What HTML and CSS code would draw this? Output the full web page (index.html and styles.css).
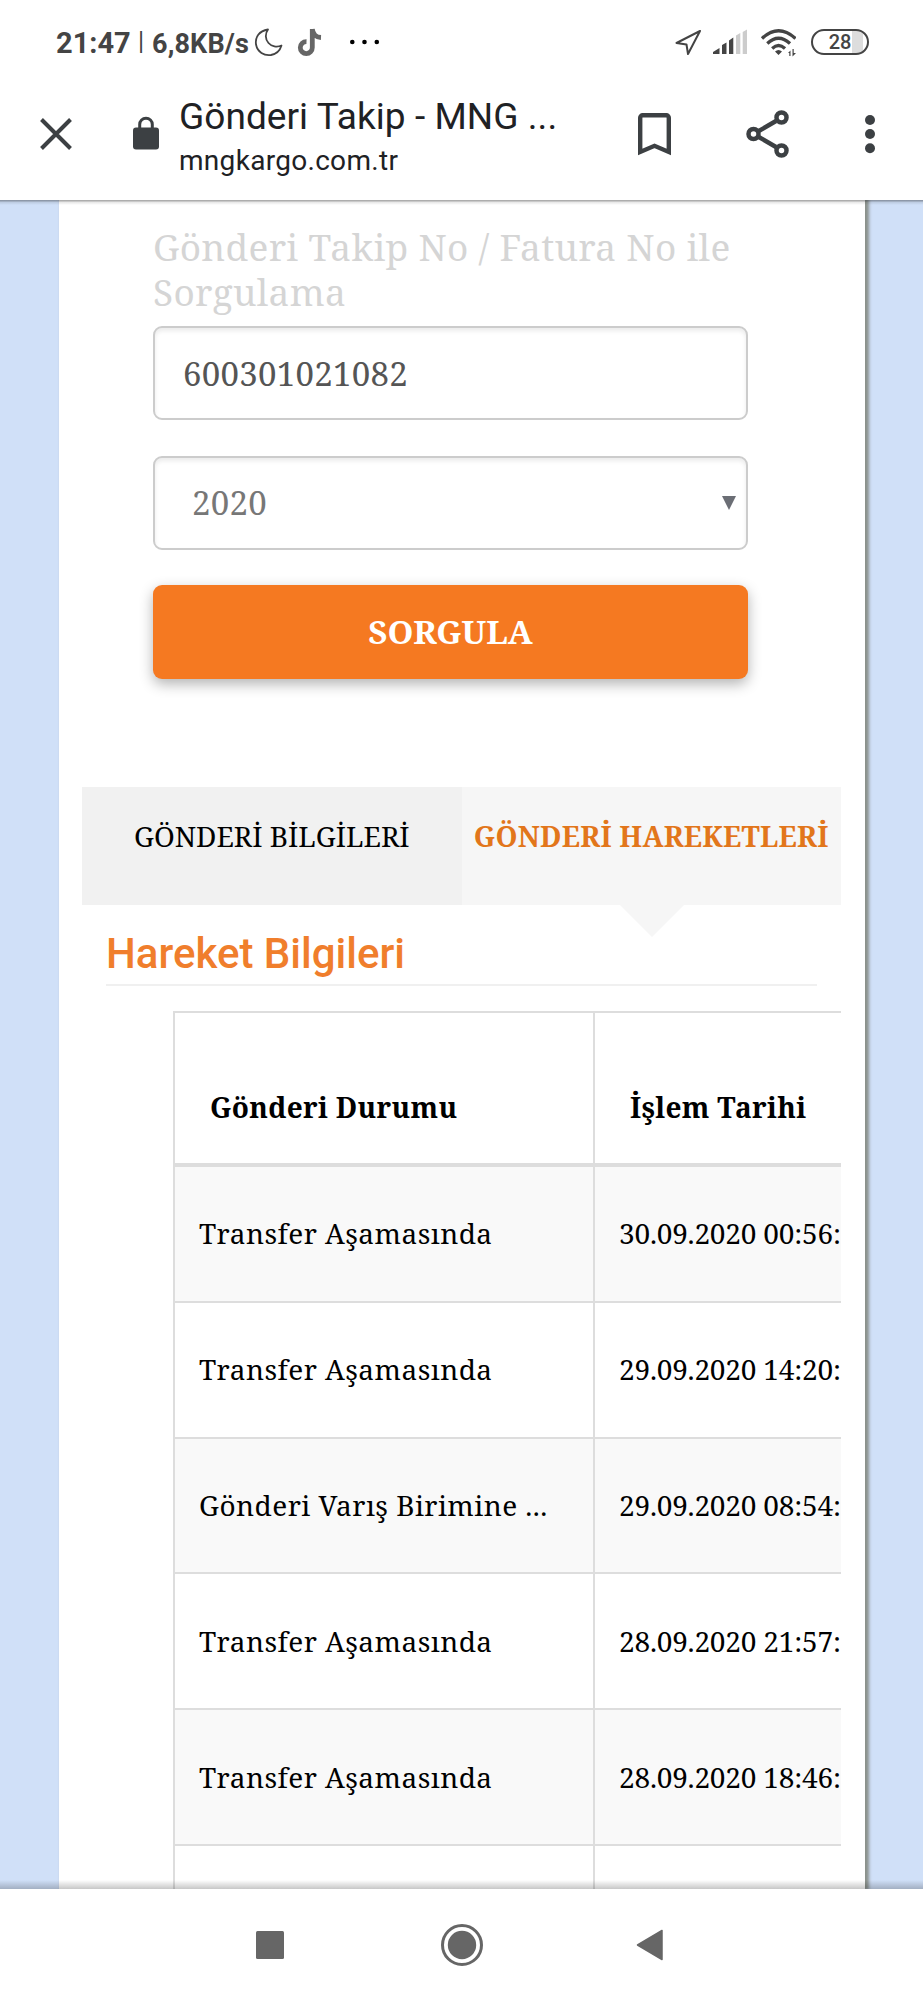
FILE: index.html
```html
<!DOCTYPE html>
<html lang="tr">
  <head>
    <meta charset="UTF-8" />
    <meta name="viewport" content="width=device-width, initial-scale=1.0" />
    <title>Gönderi Takip - MNG Kargo</title>
    <link rel="stylesheet" href="styles.css">
  </head>
  <body>
    <div class="status">
      <span class="clock">21:47</span>
      <span class="bar">|</span>
      <span class="speed">6,8KB/s</span>
      <svg class="moon" width="30" height="30" viewBox="254 27 30 30">
        <path d="M268 29.5C259 31 255 37 256 44.500C257.500 52 264 56 271 55C276.500 54 280 50.500 281.500 45.500C277 47.500 271.500 46.500 268.500 43C265 39 265 33.500 268 29.500Z" fill="none" stroke="#444" stroke-width="1.8" stroke-linejoin="round" />
      </svg>
      <svg class="note" width="26" height="30" viewBox="297 27 26 30">
        <path d="M312.300 29V47.500A6 6 0 1 1 306.500 41.600M312.300 29C313 34.500 316.500 37.300 321 37.500" fill="none" stroke="#666" stroke-width="4.800" />
      </svg>
      <svg class="more" width="32" height="10" viewBox="348 37 32 10">
        <circle cx="352.300" cy="42" r="2.300" /><circle cx="364.500" cy="42" r="2.300" /><circle cx="376.800" cy="42" r="2.300" />
      </svg>
      <svg class="signals" width="122" height="32" viewBox="674 27 122 32">
        <path d="M700 31L676.500 43L686.500 44.500L688 54Z" fill="none" stroke="#444" stroke-width="2" stroke-linejoin="round" />
        <path d="M713 54V52L719.500 48V54ZM722 54V45L726.500 42.500V54ZM729 54V40.500L733.300 37.500V54Z" fill="#444" />
        <path d="M736 54V35.500L740.300 33V54ZM742.700 54V32L747 29.500V54Z" fill="#ccc" />
        <g fill="none" stroke="#444" stroke-width="3.300">
          <path d="M762 38.500Q778.500 23 795.500 38.500" />
          <path d="M767.300 43.500Q778.500 33 790 43.500" />
          <path d="M772.200 48.500Q778.500 42.500 785 48.500" />
        </g>
        <path d="M775 51.500Q778.500 48.500 782 51.500L778.500 55ZM788 53L790.500 50.500V56H789.300V53ZM792.500 49H793.700V53H796L792.500 56.500Z" fill="#444" />
      </svg>
      <span class="battery">28</span>
    </div>

    <div class="toolbar">
      <svg class="close" width="34" height="34" viewBox="0 0 34 34">
        <path d="M2.500 2.500L31.500 31.500M31.500 2.500L2.500 31.500" stroke="#3c4043" stroke-width="4" />
      </svg>
      <svg class="lock" width="26" height="34" viewBox="0 0 26 34">
        <path d="M6.700 13V8.500A6.300 6.300 0 0 1 19.300 8.500V13" fill="none" stroke="#3c4043" stroke-width="3" />
        <rect y="11.500" width="26" height="22" rx="3" fill="#3c4043" />
      </svg>
      <div class="address">
        <div class="page-title">Gönderi Takip - MNG ...</div>
        <div class="page-url">mngkargo.com.tr</div>
      </div>
      <svg class="bookmark" width="33" height="43" viewBox="0 0 33 43">
        <path d="M2.200 39V4.700A2.500 2.500 0 0 1 4.700 2.200H28.300A2.500 2.500 0 0 1 30.800 4.700V39L16.500 32.800Z" fill="none" stroke="#3c4043" stroke-width="4.400" />
      </svg>
      <svg class="share" width="44" height="48" viewBox="0 0 44 48">
        <g fill="none" stroke="#3c4043" stroke-width="4.500">
          <path d="M12 21.500L30 11M12 26.500L30 37" />
          <circle cx="7.500" cy="24" r="5" /><circle cx="35.500" cy="7.500" r="5" /><circle cx="35.500" cy="40.500" r="5" />
        </g>
      </svg>
      <svg class="menu" width="10" height="40" viewBox="0 0 10 40">
        <g fill="#3c4043"><circle cx="5" cy="6" r="5" /><circle cx="5" cy="20" r="5" /><circle cx="5" cy="34.300" r="5" /></g>
      </svg>
    </div>

    <div class="viewport">
      <div class="page">
        <form class="query" autocomplete="off">
          <label for="code">Gönderi Takip No / Fatura No ile Sorgulama</label>
          <input type="text" id="code" name="code" value="600301021082" />
          <div class="year">
            <select name="year">
              <option value="2020">2020</option>
            </select>
            <svg class="arrow" width="14" height="14" viewBox="0 0 14 14"><path d="M0 0H14L7 14Z" fill="#6b6e75" /></svg>
          </div>
          <button type="button">SORGULA</button>
        </form>

        <div class="tabs">
          <a class="tab">GÖNDERİ BİLGİLERİ</a>
          <a class="tab active">GÖNDERİ HAREKETLERİ</a>
        </div>

        <h2>Hareket Bilgileri</h2>
        <div class="table-wrap">
          <table>
            <thead>
              <tr>
                <th>Gönderi Durumu</th>
                <th>İşlem Tarihi</th>
              </tr>
            </thead>
            <tbody>
              <tr>
                <td>Transfer Aşamasında</td>
                <td>30.09.2020 00:56:</td>
              </tr>
              <tr>
                <td>Transfer Aşamasında</td>
                <td>29.09.2020 14:20:</td>
              </tr>
              <tr>
                <td>Gönderi Varış Birimine ...</td>
                <td>29.09.2020 08:54:</td>
              </tr>
              <tr>
                <td>Transfer Aşamasında</td>
                <td>28.09.2020 21:57:</td>
              </tr>
              <tr>
                <td>Transfer Aşamasında</td>
                <td>28.09.2020 18:46:</td>
              </tr>
              <tr>
                <td></td>
                <td></td>
              </tr>
            </tbody>
          </table>
        </div>
      </div>
    </div>

    <div class="navbar">
      <svg width="28" height="28" viewBox="0 0 28 28"><rect width="28" height="28" rx="1.500" fill="#666" /></svg>
      <svg class="home" width="42" height="42" viewBox="0 0 42 42">
        <circle cx="21" cy="21" r="19.500" fill="none" stroke="#666" stroke-width="3" />
        <circle cx="21" cy="21" r="14.200" fill="#666" />
      </svg>
      <svg class="back" width="27" height="32" viewBox="0 0 27 32"><path d="M26 1.500V30.500L1.500 16Z" fill="#666" stroke="#666" stroke-width="1.500" stroke-linejoin="round" /></svg>
    </div>
  </body>
</html>
```
FILE: styles.css
```css
* {
  margin: 0;
  padding: 0;
  box-sizing: border-box;
}
body {
  width: 923px;
  height: 2000px;
  overflow: hidden;
  background-color: #fff;
  font-family: "Noto Serif", "DejaVu Serif", serif;
}
svg {
  display: block;
  flex-shrink: 0;
}

/* status bar */
.status {
  display: flex;
  align-items: flex-start;
  height: 84px;
  padding-left: 56px;
  font-family: Roboto, sans-serif;
  font-weight: bold;
  color: #444;
  white-space: nowrap;
}
.clock {
  width: 82px;
  margin-top: 26px;
  font-size: 29px;
  line-height: 34px;
}
.bar {
  width: 14px;
  margin-top: 27px;
  font-size: 25px;
  line-height: 30px;
  font-weight: 400;
}
.speed {
  width: 102px;
  margin-top: 29px;
  font-size: 27px;
  line-height: 30px;
  letter-spacing: 0.15px;
}
.moon,
.note {
  margin-top: 27px;
}
.note {
  margin-left: 13px;
}
.more {
  margin: 37px 0 0 25px;
}
.signals {
  margin: 27px 0 0 294px;
}
.battery {
  width: 58px;
  height: 26px;
  margin: 29px 0 0 15px;
  border: 2px solid #444;
  border-radius: 13px;
  font-size: 20px;
  font-weight: 500;
  line-height: 23px;
  text-align: center;
  background: linear-gradient(90deg, #fff 39px, #ddd 39px, #ddd 50px, #fff 50px);
}

/* browser toolbar */
.toolbar {
  display: flex;
  height: 116px;
  padding-left: 39px;
  font-family: Roboto, sans-serif;
  color: #202124;
}
.close {
  margin-top: 33px;
}
.lock {
  margin: 32px 0 0 60px;
}
.address {
  width: 459px;
  margin-left: 20px;
  white-space: nowrap;
}
.page-title {
  margin-top: 11px;
  font-size: 37px;
  line-height: 44px;
  letter-spacing: 0.06px;
}
.page-url {
  margin-top: 5px;
  font-size: 28px;
  line-height: 34px;
  letter-spacing: 0.3px;
}
.bookmark {
  margin-top: 29px;
}
.share {
  margin: 26px 0 0 75px;
}
.menu {
  margin: 30px 0 0 75px;
}

/* web page */
.viewport {
  position: relative;
  height: 1689px;
  padding-left: 59px;
  overflow: hidden;
  background-color: #d0e0f8;
}
.viewport::before,
.viewport::after {
  content: "";
  position: absolute;
  left: 0;
  right: 0;
  z-index: 1;
}
.viewport::before {
  top: 0;
  height: 5px;
  background: linear-gradient(rgba(0, 0, 0, 0.32) 1px, rgba(0, 0, 0, 0.1) 2px, transparent);
}
.viewport::after {
  bottom: 0;
  height: 9px;
  background: linear-gradient(transparent, rgba(0, 0, 0, 0.22));
}
.page {
  width: 806px;
  height: 100%;
  padding: 24px 24px 0 23px;
  background-color: #fff;
  box-shadow: 3px 0 3px 1px #8b918c;
}
.query {
  width: 595px;
  margin-left: 71px;
}
.query label {
  display: block;
  font-size: 37px;
  line-height: 45px;
  letter-spacing: 0.3px;
  color: #d5d5d5;
}
.query input,
.query select {
  display: block;
  width: 100%;
  height: 94px;
  border: 2px solid #ccc;
  border-radius: 9px;
  outline: none;
  background-color: #fff;
  box-shadow: inset 0 3px 4px rgba(0, 0, 0, 0.08);
  font-family: inherit;
  font-size: 33px;
  letter-spacing: 0.3px;
  color: #555;
}
.query input {
  margin-top: 12px;
  padding-left: 28px;
}
.year {
  position: relative;
  margin: 36px 0 35px;
}
.query select {
  appearance: none;
  padding: 0 0 2px 37px;
  color: #777;
}
.arrow {
  position: absolute;
  top: 40px;
  right: 12px;
}
.query button {
  display: block;
  width: 100%;
  height: 94px;
  padding-bottom: 2px;
  border: 0;
  border-radius: 9px;
  background-color: #f57921;
  box-shadow: 0 5px 14px rgba(0, 0, 0, 0.3);
  font-family: inherit;
  font-size: 33px;
  font-weight: bold;
  color: #fff;
}
.tabs {
  display: flex;
  height: 118px;
  margin-top: 108px;
}
.tab {
  position: relative;
  width: 380px;
  padding-top: 29px;
  background-color: #f1f1f1;
  font-size: 28px;
  line-height: 40px;
  text-align: center;
  white-space: nowrap;
  color: #000;
}
.tab.active {
  background-color: #f6f6f6;
  font-weight: bold;
  letter-spacing: 0.2px;
  color: #e2761b;
}
.tab.active::after {
  content: "";
  position: absolute;
  top: 118px;
  left: 158px;
  border: 32px solid transparent;
  border-top-color: #f6f6f6;
  border-bottom: 0;
}
h2 {
  margin: 21px 24px 0;
  height: 60px;
  border-bottom: 2px solid #f0f0f0;
  font-family: Roboto, sans-serif;
  font-size: 42px;
  font-weight: 500;
  line-height: 56px;
  color: #f07e2c;
}
.table-wrap {
  margin: 25px 0 0 91px;
  overflow: hidden;
}
table {
  width: 900px;
  table-layout: fixed;
  border-collapse: separate;
  border-spacing: 0;
  border-top: 2px solid #ddd;
  color: #000;
}
th,
td {
  border-left: 2px solid #ddd;
  text-align: left;
  white-space: nowrap;
  font-size: 28px;
  line-height: 36px;
}
th:first-child {
  width: 420px;
}
th {
  height: 154px;
  padding: 38px 0 0 35px;
  border-bottom: 4px solid #ddd;
  letter-spacing: 0.3px;
}
td {
  height: 135.8px;
  padding: 0 0 1px 24px;
  border-bottom: 2px solid #ddd;
  letter-spacing: 0.45px;
}
td:last-child {
  letter-spacing: -0.2px;
}
tbody tr:nth-child(odd) td {
  background-color: #f9f9f9;
}

/* android navigation */
.navbar {
  display: flex;
  align-items: center;
  height: 111px;
  padding-left: 256px;
}
.home {
  margin-left: 157px;
}
.back {
  margin-left: 153px;
}
```
